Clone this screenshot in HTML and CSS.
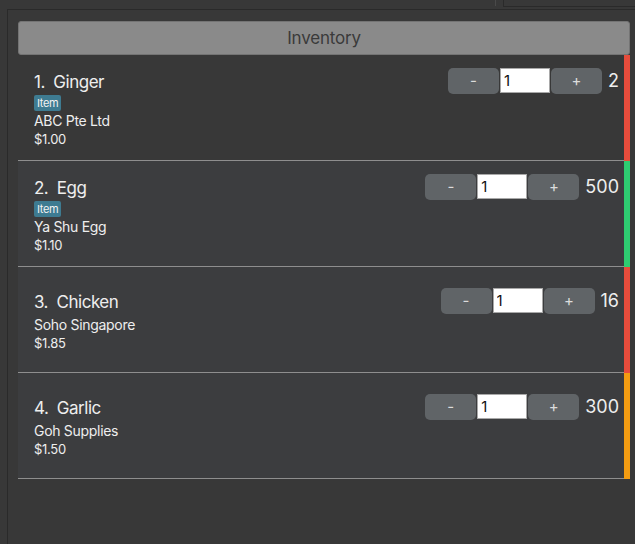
FILE: index.html
```html
<!DOCTYPE html>
<html>
<head>
<meta charset="utf-8">
<link rel="stylesheet" href="styles.css">
</head>
<body>
<div class="topbar">
  <div class="top-gap"></div>
  <div class="top-line"></div>
  <div class="top-box"></div>
</div>
<div class="panel">
  <div class="header">Inventory</div>
  <div class="list">
    <div class="card card-first">
      <div class="main">
        <div class="body">
          <div class="info">
            <div class="title">1.&nbsp;&nbsp;Ginger</div>
            <div class="tags"><span class="tag">Item</span></div>
            <div class="supplier">ABC Pte Ltd</div>
            <div class="price">$1.00</div>
          </div>
          <div class="controls">
            <button class="btn">-</button><input class="qty-input" type="text" value="1"><button class="btn">+</button>
            <span class="qty">2</span>
          </div>
        </div>
      </div>
      <div class="strip red"></div>
    </div>
    <div class="card">
      <div class="main">
        <div class="body">
          <div class="info">
            <div class="title">2.&nbsp;&nbsp;Egg</div>
            <div class="tags"><span class="tag">Item</span></div>
            <div class="supplier">Ya Shu Egg</div>
            <div class="price">$1.10</div>
          </div>
          <div class="controls">
            <button class="btn">-</button><input class="qty-input" type="text" value="1"><button class="btn">+</button>
            <span class="qty">500</span>
          </div>
        </div>
      </div>
      <div class="strip green"></div>
    </div>
    <div class="card">
      <div class="main">
        <div class="body">
          <div class="info">
            <div class="title">3.&nbsp;&nbsp;Chicken</div>
            <div class="supplier">Soho Singapore</div>
            <div class="price">$1.85</div>
          </div>
          <div class="controls">
            <button class="btn">-</button><input class="qty-input" type="text" value="1"><button class="btn">+</button>
            <span class="qty">16</span>
          </div>
        </div>
      </div>
      <div class="strip red"></div>
    </div>
    <div class="card">
      <div class="main">
        <div class="body">
          <div class="info">
            <div class="title">4.&nbsp;&nbsp;Garlic</div>
            <div class="supplier">Goh Supplies</div>
            <div class="price">$1.50</div>
          </div>
          <div class="controls">
            <button class="btn">-</button><input class="qty-input" type="text" value="1"><button class="btn">+</button>
            <span class="qty">300</span>
          </div>
        </div>
      </div>
      <div class="strip orange"></div>
    </div>
  </div>
</div>
</body>
</html>
```
FILE: styles.css
```css
html, body {
  margin: 0;
  padding: 0;
  background: #383838;
  height: 100%;
  overflow: hidden;
  font-family: Inter, "Noto Sans", sans-serif;
}
.topbar {
  display: flex;
  height: 9px;
}
.top-gap {
  width: 495px;
}
.top-line {
  width: 1px;
  height: 6px;
  background: #4a4a4a;
}
.top-box {
  margin-left: 7px;
  flex: 1;
  height: 6px;
  border-left: 1px solid #2a2a2a;
  border-bottom: 1px solid #2a2a2a;
}
.panel {
  margin-left: 7px;
  border-top: 1px solid #2a2a2a;
  border-left: 1px solid #2a2a2a;
  padding: 11px 5px 0 10px;
  height: calc(100% - 9px);
  box-sizing: border-box;
}
.header {
  height: 32px;
  background: #8a8a8a;
  border: 1px solid #747474;
  border-radius: 3px;
  color: #3a3a3a;
  font-size: 17px;
  letter-spacing: -0.2px;
  display: flex;
  align-items: center;
  justify-content: center;
}
.card {
  display: flex;
  height: 106px;
  background: #3c3d3f;
}
.card-first {
  background: #383838;
}
.main {
  flex: 1;
  border-bottom: 1px solid #8e8e8e;
  display: flex;
  align-items: center;
  padding-left: 16px;
}
.body {
  flex: 1;
  display: flex;
  align-items: flex-start;
}
.info {
  flex: 1;
  color: #eeeeee;
  letter-spacing: -0.3px;
}
.title {
  font-size: 17px;
  line-height: 26px;
  letter-spacing: -0.5px;
  padding-top: 1px;
}
.tags {
  margin-top: 0;
  display: flex;
}
.tag {
  background: #3e7b91;
  color: #f2f2f2;
  font-size: 11px;
  line-height: 16px;
  padding: 0 3px;
  border-radius: 2px;
  letter-spacing: -0.3px;
}
.supplier {
  font-size: 14px;
  line-height: 18px;
  margin-top: 1px;
}
.price {
  font-size: 13px;
  line-height: 18px;
}
.controls {
  display: flex;
  align-items: center;
  gap: 1px;
  padding-right: 5px;
}
.btn {
  width: 51px;
  height: 26px;
  background: #606467;
  border: none;
  border-radius: 5px;
  color: #dcdcdc;
  font-family: Inter, sans-serif;
  font-size: 15px;
  padding: 0;
}
.qty-input {
  width: 50px;
  height: 25px;
  box-sizing: border-box;
  border: 1px solid #a8a8a8;
  background: #ffffff;
  color: #111;
  font-family: Inter, sans-serif;
  font-size: 15px;
  padding: 0 3px;
  margin: 0;
}
.qty {
  margin-left: 5px;
  color: #eeeeee;
  font-size: 18px;
}
.strip {
  width: 6px;
}
.red { background: #e74c3c; }
.green { background: #2ecc71; }
.orange { background: #f39c12; }
```
